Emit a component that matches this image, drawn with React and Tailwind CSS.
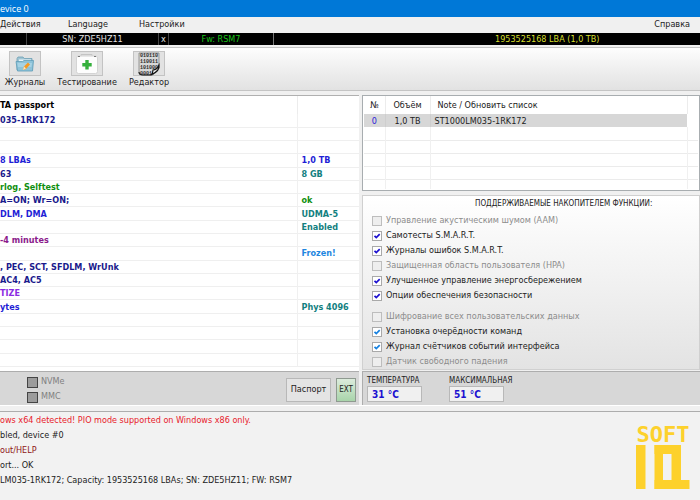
import { clsx } from 'clsx'

const passportRows = [
  { text: '035-1RK172', tone: 'text-[#1a1a8c]' },
  {},
  {},
  { text: '8 LBAs', tone: 'text-[#1f1fd6]', value: '1,0 TB', valueTone: 'text-[#1f1fd6]' },
  { text: '63', tone: 'text-[#1a1a8c]', value: '8 GB', valueTone: 'text-[#128080]' },
  { text: 'rlog, Selftest', tone: 'text-[#0f8f0f]' },
  { text: 'A=ON; Wr=ON;', tone: 'text-[#1a1a8c]', value: 'ok', valueTone: 'text-[#0f8f0f]' },
  { text: 'DLM, DMA', tone: 'text-[#1f1fd6]', value: 'UDMA-5', valueTone: 'text-[#128080]' },
  { value: 'Enabled', valueTone: 'text-[#128080]' },
  { text: '-4 minutes', tone: 'text-[#8b1a8b]' },
  { value: 'Frozen!', valueTone: 'text-[#1e86e0]' },
  { text: ', PEC, SCT, SFDLM, WrUnk', tone: 'text-[#1a1a8c]' },
  { text: 'AC4, AC5', tone: 'text-[#1a1a8c]' },
  { text: 'TIZE', tone: 'text-[#8a2be2]' },
  { text: 'ytes', tone: 'text-[#1f1fd6]', value: 'Phys 4096', valueTone: 'text-[#128080]' },
  {},
  {},
  {},
  {},
]

const featureGroups = [
  [
    { id: 'aam', label: 'Управление акустическим шумом (AAM)' },
    { id: 'smart', label: 'Самотесты S.M.A.R.T.', on: true },
    { id: 'smartlog', label: 'Журналы ошибок S.M.A.R.T.', on: true },
    { id: 'hpa', label: 'Защищенная область пользователя (HPA)' },
    { id: 'apm', label: 'Улучшенное управление энергосбережением', on: true },
    { id: 'security', label: 'Опции обеспечения безопасности', on: true },
  ],
  [
    { id: 'crypt', label: 'Шифрование всех пользовательских данных' },
    { id: 'ncq', label: 'Установка очерёдности команд', on: true, light: true },
    { id: 'phy', label: 'Журнал счётчиков событий интерфейса', on: true, light: true },
    { id: 'freefall', label: 'Датчик свободного падения' },
  ],
]

const logLines = [
  { text: 'ows x64 detected! PIO mode supported on Windows x86 only.', tone: 'text-[#e8202a]' },
  { text: 'bled, device #0', tone: 'text-[#222]' },
  { text: 'out/HELP', tone: 'text-[#8e1616]' },
  { text: 'ort... OK', tone: 'text-[#222]' },
  { text: 'LM035-1RK172; Capacity: 1953525168 LBAs; SN: ZDE5HZ11; FW: RSM7', tone: 'text-[#222]' },
]

function FolderIcon() {
  return (
    <svg width="20" height="20" viewBox="0 0 20 20" aria-hidden="true">
      <path d="M2 4.5 3 3h5l1.200 1.500H17V16H2z" fill="#9fc4d3" stroke="#6d9fb4" strokeWidth=".8" />
      <path d="M4 5.500h12V8H4z" fill="#e9f4f8" />
      <path d="M1 7.500h6.500L9 6.500h9.500L17.500 17h-15z" fill="#8ec3d9" stroke="#5e9db8" strokeWidth=".8" />
      <path d="M2.500 9h14.500l-.6 4H3z" fill="#b0d9e8" opacity=".7" />
      <path d="m8 16 1-3.500 4-4 2 2-4 4.500z" fill="#f59a23" />
      <path d="m8 16 1-3.500 2 2z" fill="#fbe6c0" />
    </svg>
  )
}

function TestIcon() {
  return (
    <svg width="24" height="22" viewBox="0 0 24 22" aria-hidden="true">
      <path d="M6 3V1.500h11V3" fill="none" stroke="#c4c4c4" />
      <rect x="1.500" y="3" width="21" height="17.500" rx="2" fill="#fdfdfd" stroke="#d4d4d4" />
      <path d="M3 3.500h2M19 3.500h2" stroke="#777" />
      <path d="M10.300 7h3.400v3h3v3.400h-3v3h-3.400v-3h-3V10h3z" fill="#35b03c" />
    </svg>
  )
}

function EditorIcon() {
  return (
    <svg width="24" height="24" viewBox="0 0 24 24" aria-hidden="true">
      <path d="M2 1h20v15l-6 7H5q-3 0-3-3z" fill="#d7d7d7" stroke="#777" strokeWidth=".7" />
      <g fontFamily="'Liberation Mono', monospace" fontSize="5" fontWeight="bold" fill="#2c2c2c">
        <text x="3" y="5">010110</text>
        <text x="3" y="11">110011</text>
        <text x="3" y="17">101000</text>
        <text x="3" y="23">0001</text>
      </g>
      <path d="M22 13q1 6-8 10 2-2 2-5 4 0 6-5z" fill="#f4f4f4" stroke="#111" strokeWidth="1.200" />
      <path d="M2 20q0 3 4 3h8" fill="none" stroke="#222" strokeWidth="1.200" />
    </svg>
  )
}

function ToolButton({ icon, label }) {
  return (
    <button className="flex w-[46px] flex-col items-center whitespace-nowrap text-[#222]">
      <span className="flex h-[25px] w-8 items-center justify-center border border-[#c3c3c3] bg-[#e2e2e2]">{icon}</span>
      <span className="leading-3">{label}</span>
    </button>
  )
}

function Feature({ id, label, on, light }) {
  return (
    <div className="flex h-[15px] items-center gap-1">
      <span className="grid size-[10px] *:[grid-area:1/1]">
        <input
          id={id}
          type="checkbox"
          defaultChecked={on}
          disabled={!on}
          className="size-[10px] appearance-none border border-[#a9a9a9] bg-white disabled:border-[#bdbdbd] disabled:bg-[#eee]"
        />
        {on && (
          <svg viewBox="0 0 10 10" className={clsx('pointer-events-none size-[10px]', light ? 'text-[#1480e0]' : 'text-[#1c10d0]')} aria-hidden="true">
            <path d="M2.500 4.800 4.300 6.600 7.700 3.200" fill="none" stroke="currentColor" strokeWidth="1.700" />
          </svg>
        )}
      </span>
      <label htmlFor={id} className={on ? 'text-[#222]' : 'text-[#8c8c8c]'}>{label}</label>
    </div>
  )
}

function PassportTable() {
  return (
    <div className="border-t border-[#b0b0b0] bg-white pb-1">
      <table className="h-[271px] w-full table-fixed border-collapse text-left leading-3 font-bold whitespace-nowrap">
        <colgroup>
          <col />
          <col className="w-[62px]" />
        </colgroup>
        <thead>
          <tr className="h-[18px]">
            <th className="p-0 text-black">TA passport</th>
            <th className="border-l border-[#ececec] p-0" />
          </tr>
        </thead>
        <tbody>
          {passportRows.map((row, i) => (
            <tr key={i} className="h-[13px] border-b border-[#efefef]">
              <td className={clsx('p-0', row.tone)}>{row.text}</td>
              <td className={clsx('border-l border-[#f0f0f0] p-0 pl-1', row.valueTone)}>{row.value}</td>
            </tr>
          ))}
        </tbody>
      </table>
    </div>
  )
}

function DriveTable() {
  return (
    <div className="border border-[#a8adb0] bg-white p-px pt-0">
      <table className="h-[93px] w-full table-fixed border-collapse text-left leading-3 whitespace-nowrap text-[#222]">
        <colgroup>
          <col className="w-[21px]" />
          <col className="w-[45px]" />
          <col />
          <col className="w-[11px]" />
        </colgroup>
        <thead>
          <tr className="h-[18px] *:p-0 *:font-normal">
            <th className="text-center">№</th>
            <th className="border-l border-[#ececec] text-center">Объём</th>
            <th className="border-l border-[#ececec]"><span className="pl-[7px]">Note / Обновить список</span></th>
            <th className="border-l border-[#ececec]" />
          </tr>
        </thead>
        <tbody>
          <tr className="h-[13px] *:p-0">
            <td className="bg-[#d7d7d7] text-center text-[#2a20d8]">0</td>
            <td className="border-l border-[#cecece] bg-[#d7d7d7] text-center">1,0 TB</td>
            <td className="border-l border-[#cecece] bg-[#d7d7d7]"><span className="pl-1">ST1000LM035-1RK172</span></td>
            <td />
          </tr>
          {[1, 2, 3, 4, 5].map((n) => (
            <tr key={n} className={clsx('*:border-l *:border-[#f0f0f0] *:p-0 *:first:border-l-0', n < 5 ? 'h-[13px] border-b border-[#ebebeb]' : 'h-[9px]')}>
              <td /><td /><td /><td />
            </tr>
          ))}
        </tbody>
      </table>
    </div>
  )
}

function Reading({ id, label, value }) {
  return (
    <div className="flex w-[55px] flex-col">
      <label htmlFor={id} className="text-[8px] leading-[10px] whitespace-nowrap text-[#222]">{label}</label>
      <input id={id} readOnly value={value} className="h-4 w-full border border-[#b8b8b8] bg-[#f0f0f0] px-1 text-[10px] font-bold text-[#1c10d0]" />
    </div>
  )
}

function BusOption({ id, label }) {
  return (
    <div className="flex h-[15px] items-center gap-[3px] text-[#808080]">
      <input id={id} type="checkbox" disabled className="size-[11px] appearance-none border border-[#444] bg-[#9c9c9c]" />
      <label htmlFor={id}>{label}</label>
    </div>
  )
}

function Logo() {
  return (
    <div className="flex w-[54px] flex-col items-center text-[#fdd12c]">
      <span className="font-['DejaVu_Sans_Mono',monospace] text-[22px] leading-5 font-bold">SOFT</span>
      <svg width="54" height="44" viewBox="0 0 54 44" fill="currentColor" aria-label="IQ" role="img">
        <rect width="9.500" height="44" />
        <rect x="18.500" width="8.500" height="44" />
        <rect x="35.500" width="9.500" height="44" />
        <rect x="18.500" width="26" height="9" />
        <rect x="18.500" y="35" width="35" height="9" />
      </svg>
    </div>
  )
}

export default function App() {
  return (
    <div className="flex min-h-screen flex-col bg-[#f0f0f0] font-['DejaVu_Sans_Condensed','DejaVu_Sans',sans-serif] text-[9px]">
      <header className="h-[17px] bg-[#0078d7] font-['Open_Sans',sans-serif] text-[9px] leading-[17px] text-white">evice 0</header>

      <nav className="flex h-4 items-center bg-[#f0f0f0] text-[#222]">
        <button className="w-[68px] text-left">Действия</button>
        <button className="w-[71px] text-left">Language</button>
        <button>Настройки</button>
        <button className="mr-[10px] ml-auto">Справка</button>
      </nav>

      <div className="flex h-3 bg-black text-center leading-3 text-[#e4e4e4]">
        <span className="w-[27px] border-r border-[#444]" />
        <span className="w-[132px] border-r border-[#444]">SN: ZDE5HZ11</span>
        <button className="w-[10px] border-r border-[#444] leading-3">x</button>
        <span className="w-[105px] border-r border-[#777] text-[#18c418]">Fw: RSM7</span>
        <span className="flex-1 pl-[221px] text-left text-[#d6de2c]">1953525168 LBA (1,0 TB)</span>
      </div>

      <div className="mt-[2px] flex h-[44px] gap-4 border-y border-[#c4c4c4] bg-linear-to-b from-[#fdfdfd] to-[#e2e2e2] pt-[3px] pl-[2px]">
        <ToolButton icon={<FolderIcon />} label="Журналы" />
        <ToolButton icon={<TestIcon />} label="Тестирование" />
        <ToolButton icon={<EditorIcon />} label="Редактор" />
      </div>

      <main className="mt-1 grid grid-cols-[359fr_338fr] gap-[3px]">
        <section className="flex min-w-0 flex-col">
          <PassportTable />
          <div className="flex h-[34px] items-center border-t border-[#adadad] bg-[#d7d7d7] pt-[2px] pr-[3px] pl-[27px]">
            <div className="flex flex-col">
              <BusOption id="nvme" label="NVMe" />
              <BusOption id="mmc" label="MMC" />
            </div>
            <button className="ml-auto h-6 w-[45px] border border-[#b8b8b8] bg-[#e4e4e4] text-[#222]">Паспорт</button>
            <button className="ml-[5px] h-6 w-5 border border-[#8f9a90] bg-linear-to-b from-[#dcebdc] to-[#a8d4aa] text-[8px] text-[#222]">EXT</button>
          </div>
        </section>

        <section className="flex min-w-0 flex-col">
          <DriveTable />
          <fieldset className="mt-1 flex flex-1 flex-col border border-[#d0d0d0] bg-linear-to-b from-white to-[#e3e3e3] pl-[9px]">
            <div className="h-[17px] pl-[103px] text-[8px] leading-4 whitespace-nowrap text-[#222]">ПОДДЕРЖИВАЕМЫЕ НАКОПИТЕЛЕМ ФУНКЦИИ:</div>
            <div className="flex flex-col gap-[6px]">
              {featureGroups.map((group, i) => (
                <div key={i}>
                  {group.map((feature) => <Feature key={feature.id} {...feature} />)}
                </div>
              ))}
            </div>
          </fieldset>
          <div className="mt-px flex h-[34px] gap-[27px] border-t border-l border-[#adadad] bg-[#d7d7d7] pt-1 pl-1">
            <Reading id="temp" label="ТЕМПЕРАТУРА" value="31 °C" />
            <Reading id="tempmax" label="МАКСИМАЛЬНАЯ" value="51 °C" />
          </div>
        </section>
      </main>

      <div className="h-px bg-white" />

      <footer className="mt-[5px] flex flex-1 justify-between border-t border-[#adadad] bg-[#f2f2f2] pt-px pr-[10px]">
        <div className="leading-[15px] whitespace-nowrap">
          {logLines.map((line) => <p key={line.text} className={line.tone}>{line.text}</p>)}
        </div>
        <div className="pt-3"><Logo /></div>
      </footer>
    </div>
  )
}
